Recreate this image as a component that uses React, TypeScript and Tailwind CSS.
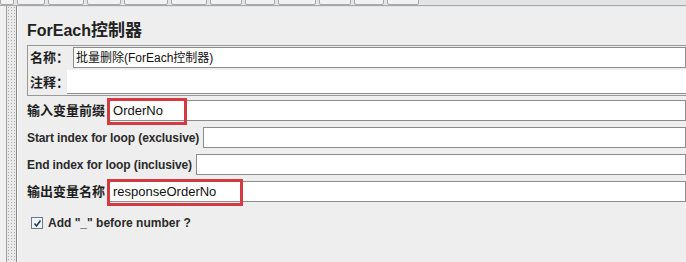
import React from "react";

const en = { fontFamily: '"Liberation Sans", Arial, sans-serif' };
const zh = { fontFamily: '"Liberation Sans", Arial, "Noto Sans CJK SC", sans-serif' };

function Row({
  label,
  labelCjk,
  value,
  red,
  redWidth,
}: {
  label: string;
  labelCjk?: boolean;
  value?: string;
  red?: boolean;
  redWidth?: number;
}) {
  return (
    <div className="flex h-[27px] items-center">
      <div
        className={
          labelCjk
            ? "text-[13px] font-bold text-[#1e1e1e] whitespace-nowrap leading-none"
            : "text-[12px] font-bold text-[#2a2a2a] whitespace-nowrap leading-none tracking-[-0.1px]"
        }
        style={labelCjk ? zh : en}
      >
        {label}
      </div>
      <div className="relative ml-[4px] flex-1 h-[21px] border border-[#8c8c8c] bg-white">
        {value && (
          <span
            className="absolute left-[3px] top-[2px] text-[13px] leading-[15px] text-[#111]"
            style={en}
          >
            {value}
          </span>
        )}
        {red && (
          <div
            className="absolute left-[-3px] top-[-3px] h-[27px] border-[3px] border-[#d33a42]"
            style={{ width: redWidth }}
          />
        )}
      </div>
    </div>
  );
}

export default function App() {
  return (
    <div className="w-[686px] h-[262px] overflow-hidden bg-[#eeeeee] flex flex-col">
      {/* toolbar remnants */}
      <div className="h-[6px] bg-[#e4e4e4] border-b border-[#a9a9a9] flex items-end overflow-hidden">
        <div className="flex h-[7px] items-end gap-[3px]">
          {[14, 28, 36, 34, 44, 36, 32, 30, 38, 32, 30, 32].map((w, i) => (
            <div
              key={i}
              className="h-[7px] border border-[#a8a8a8] bg-[#f2f2f2] rounded-[2px]"
              style={{ width: w }}
            />
          ))}
        </div>
      </div>
      <div className="flex flex-1">
        {/* left splitter */}
        <div className="w-[7px] bg-[#f0f0f0] border-r border-[#a0a0a0]" />
        <div className="w-[9px] bg-[#eaeaea] bg-[radial-gradient(circle,#a8a8a8_0.9px,transparent_1px)] bg-[length:3px_3px]" />
        <div className="w-[2px] bg-[#f8f8f8] border-l border-[#8a8a8a]" />
        {/* main panel */}
        <div className="flex-1 min-w-0 flex flex-col pl-[9px] border-t border-[#dfe4ee]">
          <div
            className="mt-[14px] h-[22px] text-[16px] font-bold text-[#222] leading-[20px] whitespace-nowrap"
            style={zh}
          >
            ForEach<span className="text-[17px]">控制器</span>
          </div>
          {/* name/comment group */}
          <div className="mt-[2px] border border-r-0 border-[#999] h-[51px] grid grid-cols-[45px_1fr] grid-rows-[23px_26px]">
            <div
              className="pl-[2px] pt-[1px] whitespace-nowrap text-[13px] font-bold text-[#1e1e1e] flex items-center"
              style={zh}
            >
              名称：
            </div>
            <div className="mt-[1px] h-[21px] min-w-0 border border-[#8c8c8c] bg-white flex items-center pl-[2px] overflow-hidden">
              <span className="text-[12px] text-[#111] whitespace-nowrap" style={zh}>
                批量删除(ForEach控制器)
              </span>
            </div>
            <div className="col-span-2 grid grid-cols-[39px_1fr] mt-[1px]">
              <div
                className="pl-[2px] whitespace-nowrap text-[13px] font-bold text-[#1e1e1e] flex items-center"
                style={zh}
              >
                注释：
              </div>
              <div className="h-[24px] bg-white border-b border-[#8c8c8c]" />
            </div>
          </div>
          <div className="mt-[1px] flex flex-col">
            <Row label="输入变量前缀" labelCjk value="OrderNo" red redWidth={80} />
            <Row label="Start index for loop (exclusive)" />
            <Row label="End index for loop (inclusive)" />
            <Row label="输出变量名称" labelCjk value="responseOrderNo" red redWidth={136} />
          </div>
          <div className="mt-[9px] ml-[4px] flex items-center gap-[5px]">
            <div className="w-[12px] h-[12px] border border-[#6b7b8f] bg-[#eef3fa] flex items-center justify-center">
              <svg width="9" height="9" viewBox="0 0 9 9">
                <path d="M1.5 4.5 L3.5 7 L7.5 1.5" stroke="#2a3a55" strokeWidth="1.6" fill="none" />
              </svg>
            </div>
            <span className="text-[12px] font-bold text-[#2a2a2a] whitespace-nowrap" style={en}>
              Add "_" before number ?
            </span>
          </div>
        </div>
      </div>
    </div>
  );
}
